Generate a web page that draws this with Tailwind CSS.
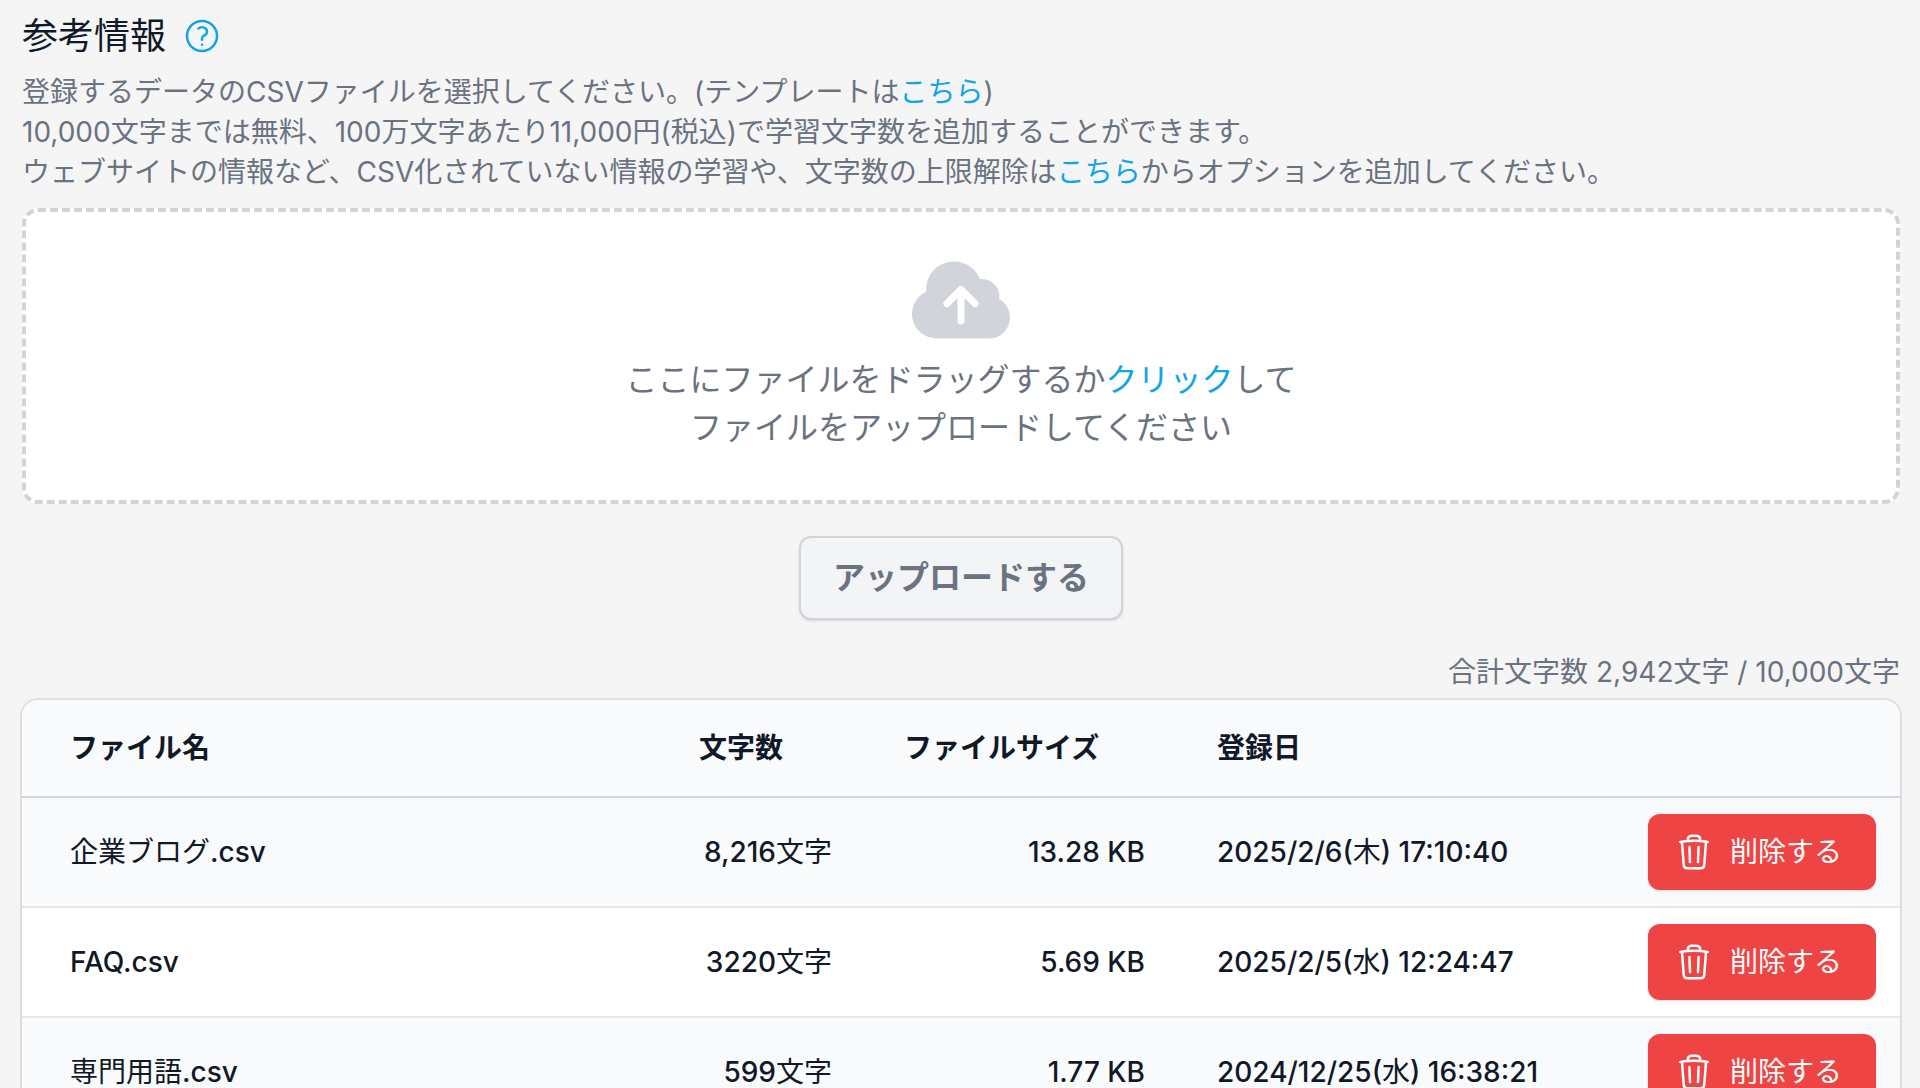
<!DOCTYPE html>
<html lang="ja">
<head>
<meta charset="utf-8">
<meta name="viewport" content="width=device-width, initial-scale=1">
<title>参考情報</title>
<script src="https://cdn.jsdelivr.net/npm/@tailwindcss/browser@4"></script>
</head>
<body class="min-h-screen overflow-x-hidden bg-[#f5f5f5] font-['Inter','Noto_Sans_CJK_JP',sans-serif] text-[28px] leading-10 text-[#6b7280]">
<svg class="hidden" aria-hidden="true">
  <symbol id="trash" viewBox="0 0 24 24" fill="none" stroke="currentColor" stroke-width="1.5" stroke-linecap="round" stroke-linejoin="round">
    <path d="m14.74 9-.346 9m-4.788 0L9.26 9m9.968-3.21c.342.052.682.107 1.022.166m-1.022-.165L18.16 19.673a2.25 2.25 0 0 1-2.244 2.077H8.084a2.25 2.25 0 0 1-2.244-2.077L4.772 5.79m14.456 0a48.108 48.108 0 0 0-3.478-.397m-12 .562c.34-.059.68-.114 1.022-.165m0 0a48.11 48.11 0 0 1 3.478-.397m7.5 0v-.916c0-1.18-.91-2.164-2.09-2.201a51.964 51.964 0 0 0-3.32 0c-1.18.037-2.09 1.022-2.09 2.201v.916m7.5 0a48.667 48.667 0 0 0-7.5 0"/>
  </symbol>
</svg>
<main class="pt-2 pr-5 pl-[22px]">
  <div class="flex h-14 items-center gap-4">
    <h1 class="text-4xl text-[#111827]">参考情報</h1>
    <button type="button" aria-label="ヘルプ" class="text-[#0ea5e9]">
      <svg class="size-10" viewBox="0 0 24 24" fill="none" stroke="currentColor" stroke-width="1.5" stroke-linecap="round" stroke-linejoin="round">
        <path d="M9.879 7.519c1.171-1.025 3.071-1.025 4.242 0 1.172 1.025 1.172 2.687 0 3.712-.203.179-.43.326-.67.442-.745.361-1.45.999-1.45 1.827v.75M21 12a9 9 0 1 1-18 0 9 9 0 0 1 18 0Zm-9 5.25h.008v.008H12v-.008Z"/>
      </svg>
    </button>
  </div>
  <p class="mt-2">登録するデータのCSVファイルを選択してください。(テンプレートは<a href="#" class="text-[#0ea5e9]">こちら</a>)<br>10,000文字までは無料、100万文字あたり11,000円(税込)で学習文字数を追加することができます。<br>ウェブサイトの情報など、CSV化されていない情報の学習や、文字数の上限解除は<a href="#" class="text-[#0ea5e9]">こちら</a>からオプションを追加してください。</p>

  <div class="mt-4 flex flex-col items-center rounded-2xl border-4 border-dashed border-[#d4d4d4] bg-white pt-8 pb-12">
    <svg class="size-28 text-[#d1d5db]" viewBox="0 0 24 24" fill="currentColor" aria-hidden="true">
      <path fill-rule="evenodd" clip-rule="evenodd" d="M10.5 3.75a6 6 0 0 0-5.98 6.496A5.25 5.25 0 0 0 6.75 20.25H18a4.5 4.5 0 0 0 2.206-8.423 3.75 3.75 0 0 0-4.133-4.303A6.001 6.001 0 0 0 10.5 3.75Zm2.03 5.47a.75.75 0 0 0-1.06 0l-3 3a.75.75 0 1 0 1.06 1.06l1.72-1.72v4.94a.75.75 0 0 0 1.5 0v-4.94l1.72 1.72a.75.75 0 1 0 1.06-1.06l-3-3Z"/>
    </svg>
    <p class="text-center text-[32px] leading-12">ここにファイルをドラッグするか<a href="#" class="text-[#0ea5e9]">クリック</a>して<br>ファイルをアップロードしてください</p>
  </div>

  <div class="mt-8 flex justify-center">
    <button type="button" class="rounded-xl border-2 border-[#d1d5db] bg-[#f3f4f6] px-8 py-4 text-[32px] leading-12 font-bold shadow-sm">アップロードする</button>
  </div>

  <p class="mt-8 text-right">合計文字数 2,942文字 / 10,000文字</p>

  <div class="mt-2 overflow-hidden rounded-t-2xl bg-white shadow-sm ring-2 ring-black/7">
    <table class="w-full table-fixed text-left font-medium whitespace-nowrap text-[#111827]">
      <colgroup>
        <col>
        <col class="w-[205px]">
        <col class="w-[313px]">
        <col class="w-[443px]">
        <col class="w-[276px]">
      </colgroup>
      <thead class="bg-[#f9fafb]">
        <tr class="h-[97px] border-b-2 border-[#d1d5db] font-bold">
          <th scope="col" class="pl-12">ファイル名</th>
          <th scope="col" class="px-9">文字数</th>
          <th scope="col" class="px-9">ファイルサイズ</th>
          <th scope="col" class="px-9">登録日</th>
          <td></td>
        </tr>
      </thead>
      <tbody>
        <tr class="border-b-2 border-[#e5e7eb] bg-[#f9fafb]">
          <td class="pl-12"><span class="font-normal">企業ブログ</span>.csv</td>
          <td class="px-9 text-right">8,216<span class="font-normal">文字</span></td>
          <td class="px-9 text-right">13.28 KB</td>
          <td class="px-9">2025/2/6(<span class="font-normal">木</span>) 17:10:40</td>
          <td class="py-4 pr-6"><button type="button" class="ml-auto flex h-19 items-center gap-4 rounded-xl bg-[#ef4444] pr-[34px] pl-[26px] font-normal text-white shadow-sm"><svg class="size-10" aria-hidden="true"><use href="#trash"/></svg>削除する</button></td>
        </tr>
        <tr class="border-b-2 border-[#e5e7eb] bg-white">
          <td class="pl-12">FAQ.csv</td>
          <td class="px-9 text-right">3220<span class="font-normal">文字</span></td>
          <td class="px-9 text-right">5.69 KB</td>
          <td class="px-9">2025/2/5(<span class="font-normal">水</span>) 12:24:47</td>
          <td class="py-4 pr-6"><button type="button" class="ml-auto flex h-19 items-center gap-4 rounded-xl bg-[#ef4444] pr-[34px] pl-[26px] font-normal text-white shadow-sm"><svg class="size-10" aria-hidden="true"><use href="#trash"/></svg>削除する</button></td>
        </tr>
        <tr class="border-b-2 border-[#e5e7eb] bg-[#f9fafb]">
          <td class="pl-12"><span class="font-normal">専門用語</span>.csv</td>
          <td class="px-9 text-right">599<span class="font-normal">文字</span></td>
          <td class="px-9 text-right">1.77 KB</td>
          <td class="px-9">2024/12/25(<span class="font-normal">水</span>) 16:38:21</td>
          <td class="py-4 pr-6"><button type="button" class="ml-auto flex h-19 items-center gap-4 rounded-xl bg-[#ef4444] pr-[34px] pl-[26px] font-normal text-white shadow-sm"><svg class="size-10" aria-hidden="true"><use href="#trash"/></svg>削除する</button></td>
        </tr>
      </tbody>
    </table>
  </div>
</main>
</body>
</html>
